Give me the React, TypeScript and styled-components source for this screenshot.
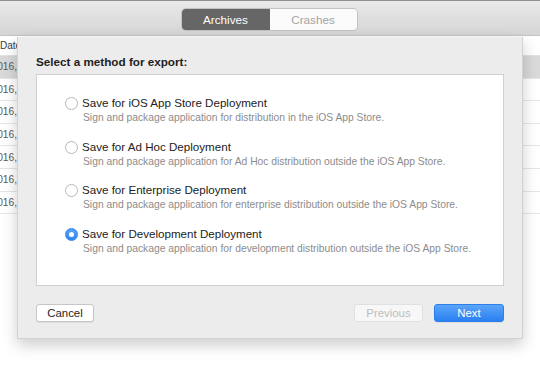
import * as React from 'react';
import styled, { createGlobalStyle } from 'styled-components';

const GlobalStyle = createGlobalStyle`
  html, body {
    margin: 0;
    padding: 0;
    background: #ffffff;
  }
  body {
    font-family: 'Liberation Sans', Arial, sans-serif;
    -webkit-font-smoothing: antialiased;
  }
`;

const Page = styled.div`
  width: 540px;
  height: 367px;
  overflow: hidden;
  background: #ffffff;
  display: flex;
  flex-direction: column;
`;

const Toolbar = styled.div`
  height: 36px;
  flex: none;
  display: flex;
  justify-content: center;
  align-items: flex-start;
  box-sizing: border-box;
  padding-top: 8px;
  padding-right: 2px;
  border-top: 1px solid #8f8f8f;
  border-bottom: 1px solid #c4c4c4;
  background: linear-gradient(#e9e9e9, #d5d5d5);
`;

const Segmented = styled.div`
  display: flex;
  height: 21px;
  border-radius: 4px;
  overflow: hidden;
  box-shadow: 0 0 0 1px #c2c2c2, 0 1px 1px rgba(0, 0, 0, 0.08);
`;

const Segment = styled.div<{ $active?: boolean }>`
  width: ${(p) => (p.$active ? 88 : 87)}px;
  display: flex;
  align-items: center;
  justify-content: center;
  font-size: 11.7px;
  color: ${(p) => (p.$active ? '#ffffff' : '#a3a3a3')};
  background: ${(p) => (p.$active ? '#666666' : '#fbfbfb')};
`;

const Content = styled.div`
  position: relative;
  flex: 1;
`;

const Table = styled.div`
  display: flex;
  flex-direction: column;
`;

const HeaderRow = styled.div`
  height: 20px;
  display: flex;
  align-items: center;
  font-size: 10px;
  color: #3a3a3a;
  border-bottom: 1px solid #e2e2e2;
  box-sizing: border-box;
`;

const Row = styled.div<{ $selected?: boolean }>`
  height: 22.6px;
  box-sizing: border-box;
  display: flex;
  align-items: center;
  font-size: 10.2px;
  color: #5a5a5a;
  background: ${(p) => (p.$selected ? '#d9d9d9' : '#ffffff')};
  border-bottom: 1px solid #e6e6e6;
`;

const CellText = styled.span`
  margin-left: -8.5px;
  white-space: nowrap;
`;

const Sheet = styled.div`
  position: absolute;
  left: 17px;
  top: 1px;
  width: 506px;
  height: 302px;
  box-sizing: border-box;
  background: #ececec;
  border: 1px solid #d2d2d2;
  border-top: none;
  box-shadow: 0 6px 14px rgba(0, 0, 0, 0.2);
  padding: 17px 18px 0 18px;
  display: flex;
  flex-direction: column;
`;

const Title = styled.div`
  font-size: 11.7px;
  font-weight: 700;
  color: #1e1e1e;
  line-height: 16px;
  margin-bottom: 4px;
`;

const OptionsBox = styled.div`
  height: 212px;
  box-sizing: border-box;
  background: #ffffff;
  border: 1px solid #d0d0d0;
  padding: 20px 0 0 28px;
  display: flex;
  flex-direction: column;
  gap: 14.6px;
`;

const Option = styled.div`
  display: flex;
  align-items: flex-start;
  gap: 4px;
`;

const Radio = styled.span<{ $checked?: boolean }>`
  width: 13px;
  height: 13px;
  margin-top: 2px;
  flex: none;
  border-radius: 50%;
  box-sizing: border-box;
  display: flex;
  align-items: center;
  justify-content: center;
  border: 1px solid ${(p) => (p.$checked ? '#3283ea' : '#b8b8b8')};
  background: ${(p) => (p.$checked ? 'linear-gradient(#5aa4f8, #2f86f0)' : '#ffffff')};

  &::after {
    content: '';
    display: ${(p) => (p.$checked ? 'block' : 'none')};
    width: 5px;
    height: 5px;
    border-radius: 50%;
    background: #ffffff;
  }
`;

const OptionText = styled.div`
  display: flex;
  flex-direction: column;
`;

const OptionTitle = styled.div`
  font-size: 11.6px;
  line-height: 16px;
  color: #222222;
  white-space: nowrap;
`;

const OptionSub = styled.div`
  font-size: 10.3px;
  line-height: 13px;
  color: #8c8c8c;
  margin-left: 1px;
  white-space: nowrap;
`;

const Footer = styled.div`
  display: flex;
  align-items: center;
  margin-top: 18px;
`;

const Spacer = styled.div`
  flex: 1;
`;

const Button = styled.div<{ $variant?: 'default' | 'disabled' | 'primary'; $width: number }>`
  width: ${(p) => p.$width}px;
  height: 18px;
  box-sizing: border-box;
  border-radius: 3px;
  display: flex;
  align-items: center;
  justify-content: center;
  font-size: 11.4px;
  color: ${(p) =>
    p.$variant === 'primary' ? '#ffffff' : p.$variant === 'disabled' ? '#bdbdbd' : '#1e1e1e'};
  background: ${(p) =>
    p.$variant === 'primary'
      ? 'linear-gradient(#5aa5f8, #2a80f1)'
      : p.$variant === 'disabled'
        ? '#f7f7f7'
        : '#ffffff'};
  border: 1px solid
    ${(p) =>
      p.$variant === 'primary' ? '#2c7fe8' : p.$variant === 'disabled' ? '#e0e0e0' : '#c6c6c6'};
  box-shadow: ${(p) => (p.$variant === 'disabled' ? 'none' : '0 1px 0 rgba(0, 0, 0, 0.06)')};
`;

const NextButton = styled(Button)`
  margin-left: 11px;
`;

const options = [
  {
    title: 'Save for iOS App Store Deployment',
    sub: 'Sign and package application for distribution in the iOS App Store.',
  },
  {
    title: 'Save for Ad Hoc Deployment',
    sub: 'Sign and package application for Ad Hoc distribution outside the iOS App Store.',
  },
  {
    title: 'Save for Enterprise Deployment',
    sub: 'Sign and package application for enterprise distribution outside the iOS App Store.',
  },
  {
    title: 'Save for Development Deployment',
    sub: 'Sign and package application for development distribution outside the iOS App Store.',
  },
];

const App = () => {
  const [selected, setSelected] = React.useState<number>(3);

  return (
    <>
      <GlobalStyle />
      <Page>
        <Toolbar>
          <Segmented>
            <Segment $active>Archives</Segment>
            <Segment>Crashes</Segment>
          </Segmented>
        </Toolbar>
        <Content>
          <Table>
            <HeaderRow>Date</HeaderRow>
            {[0, 1, 2, 3, 4, 5, 6].map((i) => (
              <Row key={i} $selected={i === 0}>
                <CellText>2016,</CellText>
              </Row>
            ))}
          </Table>
          <Sheet>
            <Title>Select a method for export:</Title>
            <OptionsBox>
              {options.map((o, i) => (
                <Option key={o.title} onClick={() => setSelected(i)}>
                  <Radio $checked={selected === i} />
                  <OptionText>
                    <OptionTitle>{o.title}</OptionTitle>
                    <OptionSub>{o.sub}</OptionSub>
                  </OptionText>
                </Option>
              ))}
            </OptionsBox>
            <Footer>
              <Button $width={58}>Cancel</Button>
              <Spacer />
              <Button $variant="disabled" $width={69}>Previous</Button>
              <NextButton $variant="primary" $width={70}>
                Next
              </NextButton>
            </Footer>
          </Sheet>
        </Content>
      </Page>
    </>
  );
};

export default App;
